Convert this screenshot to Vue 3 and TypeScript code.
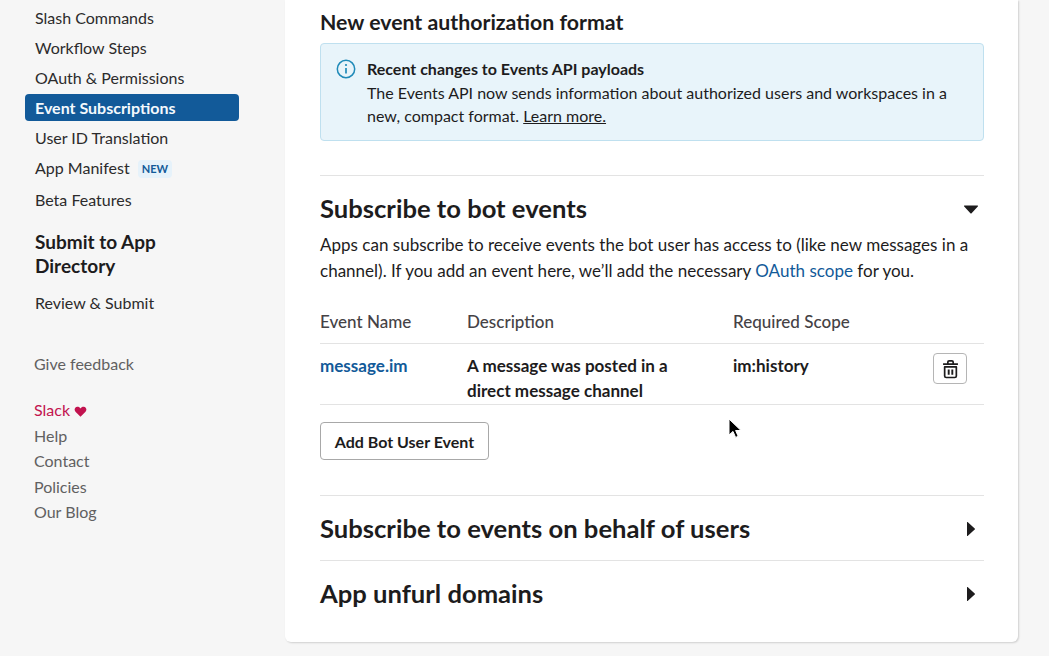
<script setup lang="ts">
const navItems = ['Slash Commands', 'Workflow Steps', 'OAuth & Permissions', 'Event Subscriptions', 'User ID Translation']
const footerLinks = ['Help', 'Contact', 'Policies', 'Our Blog']
</script>

<template>
  <div class="page">
    <aside class="sidebar">
      <nav class="nav">
        <a
          v-for="item in navItems"
          :key="item"
          class="nav-item"
          :class="{ active: item === 'Event Subscriptions' }"
        >{{ item }}</a>
        <a class="nav-item">App Manifest <span class="new-badge">NEW</span></a>
        <a class="nav-item beta">Beta Features</a>
      </nav>
      <h3 class="nav-heading">Submit to App Directory</h3>
      <a class="nav-item review">Review &amp; Submit</a>
      <a class="feedback">Give feedback</a>
      <div class="footer-links">
        <a class="slack-link">Slack
          <svg class="heart" viewBox="0 0 14 12" width="13" height="11">
            <path d="M7 11.6 1.5 6.2C-.3 4.4.6 1 3.5.7 5 .6 6.2 1.3 7 2.6 7.8 1.3 9 .6 10.500.7c2.900.3 3.800 3.700 2 5.500z" fill="currentColor" />
          </svg>
        </a>
        <a v-for="link in footerLinks" :key="link">{{ link }}</a>
      </div>
    </aside>

    <main class="card">
      <h2 class="format-title">New event authorization format</h2>
      <div class="alert">
        <svg class="info-icon" viewBox="0 0 20 20" width="20" height="20" fill="none" stroke="currentColor">
          <circle cx="10" cy="10" r="8.700" stroke-width="1.500" />
          <path d="M10 9v5.500" stroke-width="1.700" />
          <circle cx="10" cy="6" r="1.100" fill="currentColor" stroke="none" />
        </svg>
        <div>
          <strong>Recent changes to Events API payloads</strong>
          <p>The Events API now sends information about authorized users and workspaces in a new, compact format. <a class="learn">Learn more.</a></p>
        </div>
      </div>

      <section class="section open">
        <div class="section-head">
          <h2>Subscribe to bot events</h2>
          <svg class="caret-down" viewBox="0 0 14 8" width="14" height="9"><path d="M.6 0h12.800a.5.5 0 0 1 .4.9L7.600 7.700a.8.8 0 0 1-1.200 0L.2.900A.5.5 0 0 1 .6 0z" fill="#1d1c1d" /></svg>
        </div>
        <p class="intro">Apps can subscribe to receive events the bot user has access to (like new messages in a channel). If you add an event here, we’ll add the necessary <a class="link">OAuth scope</a> for you.</p>
        <div class="table">
          <div class="row header">
            <span>Event Name</span>
            <span>Description</span>
            <span>Required Scope</span>
            <span></span>
          </div>
          <div class="row body">
            <a class="link event">message.im</a>
            <span>A message was posted in a direct message channel</span>
            <span>im:history</span>
            <button class="trash" type="button" aria-label="Remove">
              <svg viewBox="0 0 16 18" width="17" height="20" fill="none" stroke="#1d1c1d" stroke-width="1.600" stroke-linejoin="round">
                <path d="M1 4.500h14M5.500 4.200V2.500a1.200 1.200 0 0 1 1.200-1.200h2.600a1.200 1.200 0 0 1 1.200 1.200v1.700" />
                <path d="M2.500 7h11v8.500a1.500 1.500 0 0 1-1.500 1.500H4a1.500 1.500 0 0 1-1.500-1.500z" />
                <path d="M6.300 9.500v5M9.700 9.500v5" stroke-width="1.800" />
              </svg>
            </button>
          </div>
        </div>
        <button class="add-btn" type="button">Add Bot User Event</button>
      </section>

      <section class="section closed">
        <div class="section-head">
          <h2>Subscribe to events on behalf of users</h2>
          <svg class="caret-right" viewBox="0 0 8 14" width="8" height="14"><path d="M0 .6v12.800a.5.5 0 0 0 .9.4l6.800-6.200a.8.8 0 0 0 0-1.200L.9.200A.5.5 0 0 0 0 .6z" fill="#1d1c1d" /></svg>
        </div>
      </section>
      <section class="section closed">
        <div class="section-head">
          <h2>App unfurl domains</h2>
          <svg class="caret-right" viewBox="0 0 8 14" width="8" height="14"><path d="M0 .6v12.800a.5.5 0 0 0 .9.4l6.800-6.200a.8.8 0 0 0 0-1.200L.9.200A.5.5 0 0 0 0 .6z" fill="#1d1c1d" /></svg>
        </div>
      </section>
    </main>

    <svg class="cursor" viewBox="0 0 14 22" width="14" height="22">
      <path d="M1 1v16l4-3.600 2.600 6 2.600-1.100-2.600-5.800h5.400z" fill="#000" stroke="#fff" stroke-width="1" />
    </svg>
  </div>
</template>

<style>
html, body {
  margin: 0;
  background: #f6f6f6;
  overflow: hidden;
}
</style>

<style scoped>
.page {
  position: relative;
  display: flex;
  align-items: flex-start;
  width: 1049px;
  height: 656px;
  overflow: hidden;
  background: #f6f6f6;
  font-family: Lato, "Liberation Sans", sans-serif;
  font-size: 16px;
  color: #1d1c1d;
}

/* sidebar */
.sidebar {
  flex: 0 0 285px;
  box-sizing: border-box;
  padding: 4px 46px 0 25px;
}
.nav {
  display: flex;
  flex-direction: column;
  gap: 3px;
}
.nav-item {
  display: block;
  height: 27px;
  padding-left: 10px;
  border-radius: 4px;
  line-height: 27px;
  color: #2c2b2c;
}
.nav-item.active {
  background: #125a99;
  color: #f4f9fd;
  font-weight: 700;
}
.nav-item.beta {
  margin-top: 2px;
}
.new-badge {
  display: inline-block;
  margin-left: 4px;
  padding: 0 4px;
  border-radius: 4px;
  background: #e6f2fa;
  color: #125a99;
  font-size: 11px;
  font-weight: 700;
  line-height: 18px;
  vertical-align: 1px;
}
.nav-heading {
  max-width: 170px;
  margin: 17px 0 0;
  padding-left: 10px;
  font-size: 19px;
  font-weight: 700;
  line-height: 24px;
  color: #1d1c1d;
}
.review {
  margin-top: 11px;
}
.feedback {
  display: block;
  margin: 35px 0 0 9px;
  line-height: 26px;
  color: #616061;
}
.footer-links {
  display: flex;
  flex-direction: column;
  margin: 20px 0 0 9px;
  line-height: 25.500px;
  color: #616061;
}
.slack-link {
  color: #c2134f;
}
.heart {
  vertical-align: -1px;
}

/* main card */
.card {
  flex: 0 0 733px;
  box-sizing: border-box;
  height: 642px;
  padding: 0 34px 0 35px;
  background: #fff;
  border-radius: 0 0 6px 6px;
  box-shadow: 1px 1px 2px rgba(0, 0, 0, 0.16);
}
.format-title {
  margin: 0;
  padding-top: 8px;
  font-size: 21.300px;
  font-weight: 700;
  line-height: 28px;
}
.alert {
  display: flex;
  gap: 11px;
  box-sizing: border-box;
  height: 98px;
  margin-top: 7px;
  padding: 13px 15px;
  border: 1px solid #bfe0ef;
  border-radius: 4px;
  background: #e8f4fa;
  line-height: 23.500px;
}
.alert strong {
  display: block;
  font-weight: 700;
}
.alert p {
  margin: 0;
}
.info-icon {
  flex: none;
  margin-top: 2px;
  color: #1f8ab8;
}
.learn {
  text-decoration: underline;
}

.section {
  border-top: 1px solid #e3e3e3;
}
.section.open {
  height: 320px;
  box-sizing: border-box;
  margin-top: 34px;
  padding-top: 16px;
}
.section.closed {
  height: 65px;
  box-sizing: border-box;
  display: flex;
  align-items: center;
}
.section-head {
  display: flex;
  flex: 1;
  align-items: center;
  justify-content: space-between;
  padding-right: 6px;
}
.section-head h2 {
  margin: 0;
  font-size: 25.600px;
  font-weight: 700;
  line-height: 32px;
}
.caret-down {
  margin-top: 3px;
}
.caret-right {
  margin: 1px 3px 0 0;
}
.intro {
  margin: 8px 0 0;
  font-size: 17.050px;
  line-height: 26px;
}
.link {
  color: #125a99;
}
.table {
  margin-top: 25px;
  font-size: 17.050px;
}
.row {
  display: grid;
  grid-template-columns: 147px 266px 1fr 34px;
  border-bottom: 1px solid #e3e3e3;
}
.row.header {
  height: 34px;
  color: #454245;
  font-weight: 500;
  line-height: 26px;
}
.row.body {
  height: 61px;
  padding-top: 9px;
  box-sizing: border-box;
  font-weight: 700;
  line-height: 25px;
}
.row.body > span {
  padding-right: 20px;
}
.trash {
  display: flex;
  align-items: center;
  justify-content: center;
  width: 34px;
  height: 31px;
  margin-left: -17px;
  padding: 0;
  border: 1px solid #b5b5b5;
  border-radius: 4px;
  background: #fff;
}
.add-btn {
  display: block;
  width: 169px;
  height: 38px;
  margin-top: 17px;
  padding: 0;
  border: 1px solid #a8a8a8;
  border-radius: 4px;
  background: #fff;
  color: #1d1c1d;
  font: 700 16px Lato, "Liberation Sans", sans-serif;
}

/* pointer captured in the screenshot */
.cursor {
  position: absolute;
  left: 728px;
  top: 418px;
}
</style>
